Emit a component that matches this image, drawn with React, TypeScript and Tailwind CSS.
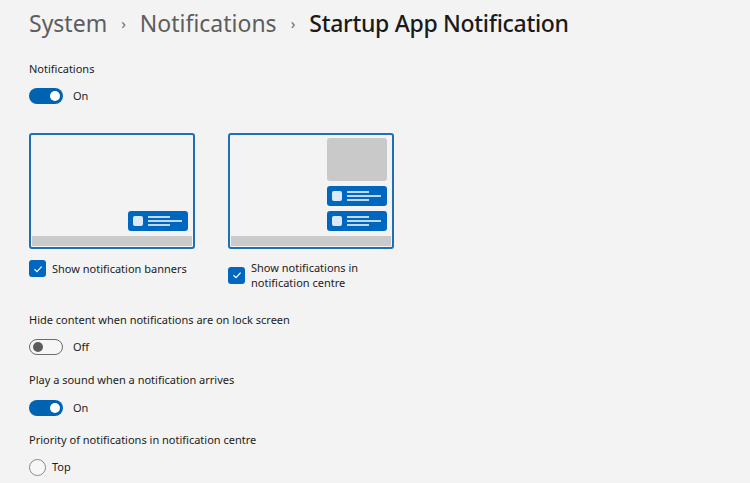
const font = { fontFamily: '"Noto Sans", "Open Sans", sans-serif' };

const Toggle = ({ on }: { on: boolean }) =>
  on ? (
    <span className="flex h-[16px] w-[34px] items-center justify-end rounded-full bg-[#0063b1] pr-[3px]">
      <span className="h-[10px] w-[10px] rounded-full bg-white" />
    </span>
  ) : (
    <span className="flex h-[16px] w-[34px] items-center rounded-full border border-[#6b6b6b] bg-[#f6f6f6] pl-[3px]">
      <span className="h-[10px] w-[10px] rounded-full bg-[#5c5c5c]" />
    </span>
  );

const ToggleRow = ({ on, className }: { on: boolean; className: string }) => (
  <div className={`flex h-[20px] items-center gap-[10px] ${className}`}>
    <Toggle on={on} />
    <span className="text-[11px] text-[#1b1b1b]">{on ? 'On' : 'Off'}</span>
  </div>
);

const Label = ({ text, className }: { text: string; className: string }) => (
  <div className={`h-[20px] text-[11px] leading-[20px] text-[#1b1b1b] ${className}`}>{text}</div>
);

const Banner = () => (
  <div className="flex h-[20px] w-[60px] items-center rounded-[3px] bg-[#0067c0] pl-[5px]">
    <span className="h-[10px] w-[10px] rounded-[2px] bg-[#dce9f6]" />
    <svg width="36" height="12" viewBox="0 0 36 12" className="ml-[5px]">
      <g stroke="#ffffff" strokeWidth="1.5">
        <line x1="0" y1="2" x2="22" y2="2" />
        <line x1="0" y1="6" x2="34" y2="6" />
        <line x1="0" y1="10" x2="22" y2="10" />
      </g>
    </svg>
  </div>
);

const Card = ({ centre }: { centre?: boolean }) => (
  <div className="flex h-[116px] w-[166px] flex-col rounded-[3px] border-2 border-[#1e6fb8] bg-[#f3f3f3] px-[1px] pb-[1px]">
    <div className="flex flex-1 flex-col items-end justify-end gap-[5px] pr-[4px] pb-[5px]">
      {centre && (
        <>
          <div className="h-[43px] w-[60px] rounded-[3px] bg-[#c9c9c9]" />
          <Banner />
        </>
      )}
      <Banner />
    </div>
    <div className="h-[10px] bg-[#cacaca]" />
  </div>
);

const Check = () => (
  <span className="flex h-[17px] w-[17px] shrink-0 items-center justify-center rounded-[3px] bg-[#0067c0]">
    <svg width="10" height="10" viewBox="0 0 10 10">
      <path d="M1.5 5.2 L4 7.6 L8.6 2.6" fill="none" stroke="#ffffff" strokeWidth="1.2" />
    </svg>
  </span>
);

export default function App() {
  return (
    <div className="min-h-screen w-full bg-[#f3f3f3] px-[29px] pt-[5px]" style={font}>
      <h1 className="flex h-[36px] items-center gap-[14px] text-[23px] leading-[36px]">
        <span className="text-[#5d5d5d]">System</span>
        <span className="text-[15px] text-[#6a6a6a]">›</span>
        <span className="text-[#5d5d5d]">Notifications</span>
        <span className="text-[15px] text-[#6a6a6a]">›</span>
        <span className="font-medium tracking-[-0.3px] text-[#1a1a1a]">Startup App Notification</span>
      </h1>

      <Label text="Notifications" className="mt-[18px]" />
      <ToggleRow on className="mt-[7px]" />

      <div className="mt-[27px] flex gap-[33px]">
        <div className="flex w-[166px] flex-col">
          <Card />
          <div className="mt-[11px] flex items-center gap-[6px]">
            <Check />
            <span className="whitespace-nowrap text-[11px] leading-[15px] text-[#1b1b1b]">
              Show notification banners
            </span>
          </div>
        </div>
        <div className="flex w-[166px] flex-col">
          <Card centre />
          <div className="mt-[11px] flex items-center gap-[6px]">
            <Check />
            <span className="text-[11px] leading-[15px] text-[#1b1b1b]">
              Show notifications in
              <br />
              notification centre
            </span>
          </div>
        </div>
      </div>

      <Label text="Hide content when notifications are on lock screen" className="mt-[20px]" />
      <ToggleRow on={false} className="mt-[7px]" />
      <Label text="Play a sound when a notification arrives" className="mt-[13px]" />
      <ToggleRow on className="mt-[8px]" />
      <Label text="Priority of notifications in notification centre" className="mt-[12px]" />
      <div className="mt-[7px] flex h-[20px] items-center gap-[6px]">
        <span className="h-[17px] w-[17px] rounded-full border border-[#8a8a8a] bg-[#f7f7f7]" />
        <span className="text-[11px] text-[#1b1b1b]">Top</span>
      </div>
    </div>
  );
}
